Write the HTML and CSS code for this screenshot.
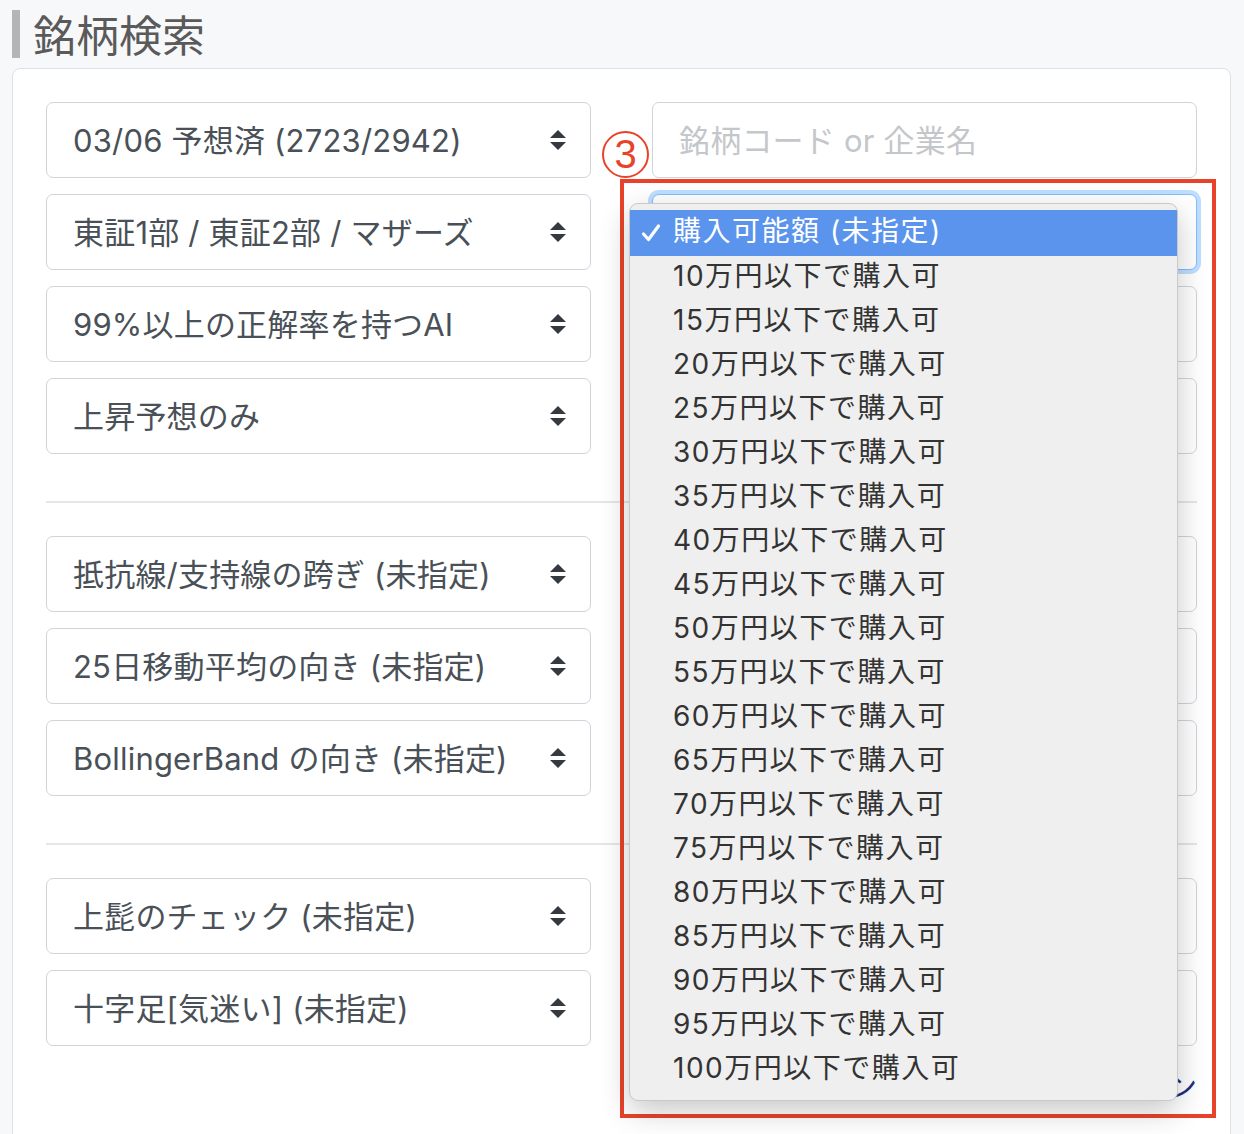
FILE: index.html
```html
<!DOCTYPE html>
<html lang="ja">
<head>
<meta charset="utf-8">
<title>銘柄検索</title>
<link rel="stylesheet" href="styles.css">
</head>
<body>
<div class="page">
  <h1 class="title">銘柄検索</h1>
  <div class="card">
    <div class="group">
      <div class="select"><span>03/06 予想済 (2723/2942)</span><svg class="arr" viewBox="0 0 16 24"><path d="M8 2 L16 10 H0 Z M0 14 H16 L8 22 Z"/></svg></div>
      <div class="input">銘柄コード or 企業名</div>
      <div class="select"><span>東証1部 / 東証2部 / マザーズ</span><svg class="arr" viewBox="0 0 16 24"><path d="M8 2 L16 10 H0 Z M0 14 H16 L8 22 Z"/></svg></div>
      <div class="select focus"><span>購入可能額 (未指定)</span><svg class="arr" viewBox="0 0 16 24"><path d="M8 2 L16 10 H0 Z M0 14 H16 L8 22 Z"/></svg></div>
      <div class="select"><span>99%以上の正解率を持つAI</span><svg class="arr" viewBox="0 0 16 24"><path d="M8 2 L16 10 H0 Z M0 14 H16 L8 22 Z"/></svg></div>
      <div class="select"><span>出来高 (未指定)</span><svg class="arr" viewBox="0 0 16 24"><path d="M8 2 L16 10 H0 Z M0 14 H16 L8 22 Z"/></svg></div>
      <div class="select"><span>上昇予想のみ</span><svg class="arr" viewBox="0 0 16 24"><path d="M8 2 L16 10 H0 Z M0 14 H16 L8 22 Z"/></svg></div>
      <div class="select"><span>並び順 (未指定)</span><svg class="arr" viewBox="0 0 16 24"><path d="M8 2 L16 10 H0 Z M0 14 H16 L8 22 Z"/></svg></div>
    </div>
    <hr class="sep">
    <div class="group">
      <div class="select"><span>抵抗線/支持線の跨ぎ (未指定)</span><svg class="arr" viewBox="0 0 16 24"><path d="M8 2 L16 10 H0 Z M0 14 H16 L8 22 Z"/></svg></div>
      <div class="select"><span>5日移動平均 (未指定)</span><svg class="arr" viewBox="0 0 16 24"><path d="M8 2 L16 10 H0 Z M0 14 H16 L8 22 Z"/></svg></div>
      <div class="select"><span>25日移動平均の向き (未指定)</span><svg class="arr" viewBox="0 0 16 24"><path d="M8 2 L16 10 H0 Z M0 14 H16 L8 22 Z"/></svg></div>
      <div class="select"><span>75日移動平均 (未指定)</span><svg class="arr" viewBox="0 0 16 24"><path d="M8 2 L16 10 H0 Z M0 14 H16 L8 22 Z"/></svg></div>
      <div class="select"><span>BollingerBand の向き (未指定)</span><svg class="arr" viewBox="0 0 16 24"><path d="M8 2 L16 10 H0 Z M0 14 H16 L8 22 Z"/></svg></div>
      <div class="select"><span>MACD (未指定)</span><svg class="arr" viewBox="0 0 16 24"><path d="M8 2 L16 10 H0 Z M0 14 H16 L8 22 Z"/></svg></div>
    </div>
    <hr class="sep">
    <div class="group">
      <div class="select"><span>上髭のチェック (未指定)</span><svg class="arr" viewBox="0 0 16 24"><path d="M8 2 L16 10 H0 Z M0 14 H16 L8 22 Z"/></svg></div>
      <div class="select"><span>下髭のチェック (未指定)</span><svg class="arr" viewBox="0 0 16 24"><path d="M8 2 L16 10 H0 Z M0 14 H16 L8 22 Z"/></svg></div>
      <div class="select"><span>十字足[気迷い] (未指定)</span><svg class="arr" viewBox="0 0 16 24"><path d="M8 2 L16 10 H0 Z M0 14 H16 L8 22 Z"/></svg></div>
      <div class="select"><span>窓開け (未指定)</span><svg class="arr" viewBox="0 0 16 24"><path d="M8 2 L16 10 H0 Z M0 14 H16 L8 22 Z"/></svg></div>
    </div>
    <div class="links"><a class="more">詳細オプション</a></div>
  </div>

  <div class="marker">3</div>
  <div class="redbox"></div>
  <ul class="menu">
    <li class="sel"><svg class="check" viewBox="0 0 20 20"><path d="M2.5 11 L7.5 16.5 L17.5 3"/></svg>購入可能額 (未指定)</li>
    <li>10万円以下で購入可</li>
    <li>15万円以下で購入可</li>
    <li>20万円以下で購入可</li>
    <li>25万円以下で購入可</li>
    <li>30万円以下で購入可</li>
    <li>35万円以下で購入可</li>
    <li>40万円以下で購入可</li>
    <li>45万円以下で購入可</li>
    <li>50万円以下で購入可</li>
    <li>55万円以下で購入可</li>
    <li>60万円以下で購入可</li>
    <li>65万円以下で購入可</li>
    <li>70万円以下で購入可</li>
    <li>75万円以下で購入可</li>
    <li>80万円以下で購入可</li>
    <li>85万円以下で購入可</li>
    <li>90万円以下で購入可</li>
    <li>95万円以下で購入可</li>
    <li>100万円以下で購入可</li>
  </ul>
</div>
</body>
</html>
```

FILE: styles.css
```css
* { box-sizing: border-box; }
html, body {
  margin: 0;
  padding: 0;
  background: #f7f8fa;
  font-family: "Inter", "Noto Sans CJK JP", sans-serif;
  color: #495057;
}
.page {
  position: relative;
  width: 1244px;
  height: 1134px;
  overflow: hidden;
  padding-top: 10px;
}
.title {
  margin: 0 0 10px 12px;
  height: 48px;
  border-left: 8px solid #b5b5b5;
  padding-left: 13px;
  font-family: "Noto Sans CJK JP", sans-serif;
  font-size: 43px;
  font-weight: 400;
  line-height: 46px;
  color: #5a5a5a;
}
.card {
  margin: 0 13px 0 12px;
  background: #fff;
  border: 1px solid #dee2e6;
  border-radius: 8px;
  padding: 33px 33px 60px 33px;
  height: 1200px;
}
.group {
  display: grid;
  grid-template-columns: 545px 545px;
  column-gap: 61px;
  row-gap: 16px;
}
.select, .input {
  height: 76px;
  border: 1.5px solid #ced4da;
  border-radius: 7px;
  background: #fff;
  display: flex;
  align-items: center;
  padding: 0 24px 3px 26px;
  font-size: 31px;
  letter-spacing: 0.2px;
  color: #495057;
  white-space: nowrap;
}
.select span { flex: 1; overflow: hidden; }
.select .arr { width: 16px; height: 24px; fill: #343a40; flex: none; margin-top: 3px; }
.input { color: #c4c7ca; }
.select.focus {
  border-color: #80bdff;
  box-shadow: 0 0 0 4px rgba(0, 123, 255, 0.25);
}
.sep {
  border: 0;
  border-top: 2px solid #e6e6e6;
  margin: 47px 0 33px 0;
}
.links {
  display: flex;
  justify-content: flex-end;
  padding-top: 16px;
}
.more {
  font-size: 30px;
  color: #1c2f80;
}
.marker {
  position: absolute;
  left: 602px;
  top: 131px;
  width: 47px;
  height: 47px;
  border: 2.5px solid #e8432a;
  border-radius: 50%;
  color: #e8432a;
  font-family: "Liberation Sans", sans-serif;
  font-size: 40px;
  line-height: 42px;
  text-align: center;
}
.redbox {
  position: absolute;
  left: 620px;
  top: 179px;
  width: 596px;
  height: 939px;
  border: 4px solid #e8432a;
}
.menu {
  position: absolute;
  left: 629px;
  top: 203px;
  width: 549px;
  height: 898px;
  margin: 0;
  padding: 6px 0 0 0;
  list-style: none;
  background: #efefef;
  border: 1px solid #c9c9c9;
  border-radius: 9px;
  box-shadow: 0 10px 30px rgba(0, 0, 0, 0.22);
}
.menu li {
  position: relative;
  height: 44px;
  line-height: 40px;
  padding-bottom: 4px;
  padding-left: 43px;
  font-size: 28px;
  letter-spacing: 1.5px;
  color: #333;
}
.menu li.sel {
  height: 46px;
  line-height: 42px;
  background: #5b94ec;
  color: #fff;
}
.check {
  position: absolute;
  left: 11px;
  top: 13px;
  width: 20px;
  height: 20px;
  fill: none;
  stroke: #fff;
  stroke-width: 3.2;
  stroke-linecap: round;
  stroke-linejoin: round;
}
```
